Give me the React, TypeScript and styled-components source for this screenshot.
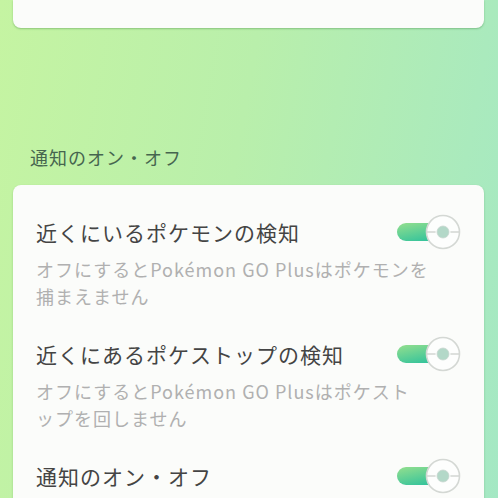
import React from "react";
import styled, { createGlobalStyle } from "styled-components";

const Global = createGlobalStyle`
  html, body { margin: 0; padding: 0; }
  body {
    width: 498px;
    height: 498px;
    overflow: hidden;
    font-family: "Noto Sans CJK JP", "Noto Sans", sans-serif;
    background: linear-gradient(100deg, #c5f4a2 0%, #b9efab 45%, #a4e8c4 100%);
  }
`;

const Page = styled.div`
  width: 498px;
  height: 498px;
  overflow: hidden;
  box-sizing: border-box;
  padding: 0 14px 0 13px;
  display: flex;
  flex-direction: column;
`;

const TopCard = styled.div`
  flex: none;
  height: 28px;
  background: #fbfcfa;
  border-radius: 0 0 8px 8px;
  box-shadow: 0 1px 2px rgba(40, 110, 40, 0.35);
`;

const SectionTitle = styled.div`
  flex: none;
  margin: 116px 0 0 17px;
  font-size: 18px;
  line-height: 26px;
  letter-spacing: 1px;
  color: #46654f;
`;

const Card = styled.div`
  flex: none;
  margin-top: 15px;
  background: #fbfcfa;
  border-radius: 8px;
  box-shadow: 0 1px 2px rgba(40, 110, 40, 0.3);
  padding: 32px 24px 40px 23px;
  display: flex;
  flex-direction: column;
  gap: 29px;
`;

const Row = styled.div`
  display: flex;
  flex-direction: column;
`;

const TitleLine = styled.div`
  display: flex;
  align-items: center;
  justify-content: space-between;
  height: 30px;
`;

const Title = styled.div`
  font-size: 21px;
  line-height: 30px;
  letter-spacing: 1px;
  color: #444444;
  white-space: nowrap;
`;

const Sub = styled.div`
  margin-top: 9px;
  font-size: 18px;
  line-height: 27px;
  letter-spacing: 1px;
  color: #b0b0b0;
  white-space: nowrap;
`;

const ToggleSvg = styled.svg`
  flex: none;
  margin-right: -1px;
`;

const Toggle: React.FC = () => (
  <ToggleSvg width="64" height="36" viewBox="0 0 64 36">
    <defs>
      <linearGradient id="trk" x1="0" y1="0" x2="0.6" y2="1">
        <stop offset="0" stopColor="#94df8e" />
        <stop offset="1" stopColor="#34c39b" />
      </linearGradient>
    </defs>
    <rect x="0" y="9" width="50" height="18" rx="9" fill="url(#trk)" />
    <circle cx="46" cy="18" r="16.5" fill="#fdfefd" stroke="#d4d8d4" strokeWidth="1.6" />
    <line x1="30" y1="18" x2="62" y2="18" stroke="#d2d6d2" strokeWidth="1.5" />
    <circle cx="46" cy="18" r="7.5" fill="#fdfefd" />
    <circle cx="46" cy="18" r="6" fill="#b3d8c8" stroke="#c8d6cf" strokeWidth="0.8" />
  </ToggleSvg>
);

export default function App() {
  return (
    <>
      <Global />
      <Page>
        <TopCard />
        <SectionTitle>通知のオン・オフ</SectionTitle>
        <Card>
          <Row>
            <TitleLine>
              <Title>近くにいるポケモンの検知</Title>
              <Toggle />
            </TitleLine>
            <Sub>
              オフにするとPokémon GO Plusはポケモンを
              <br />
              捕まえません
            </Sub>
          </Row>
          <Row>
            <TitleLine>
              <Title>近くにあるポケストップの検知</Title>
              <Toggle />
            </TitleLine>
            <Sub>
              オフにするとPokémon GO Plusはポケスト
              <br />
              ップを回しません
            </Sub>
          </Row>
          <Row>
            <TitleLine>
              <Title>通知のオン・オフ</Title>
              <Toggle />
            </TitleLine>
          </Row>
        </Card>
      </Page>
    </>
  );
}
